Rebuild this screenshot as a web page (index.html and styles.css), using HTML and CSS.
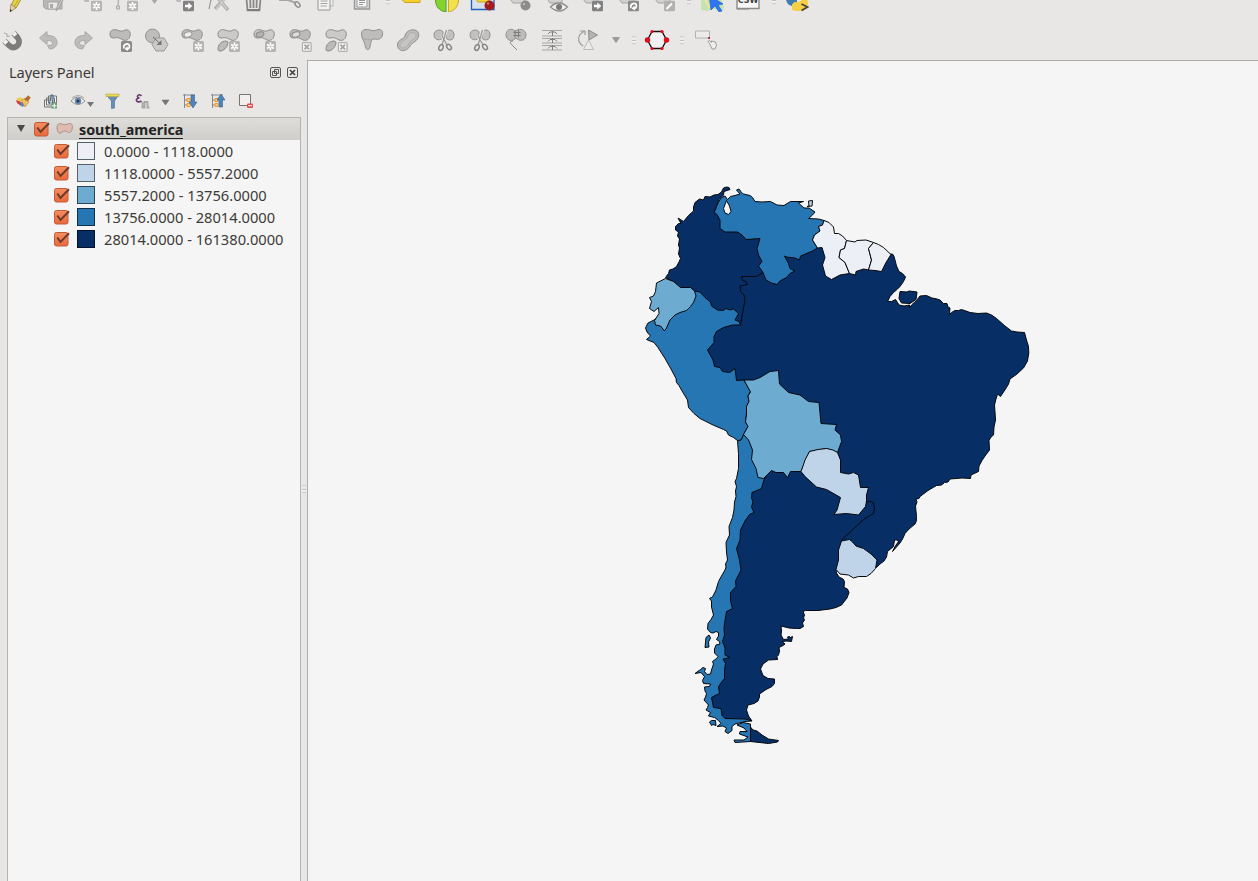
FILE: index.html
```html
<!DOCTYPE html>
<html lang="en">
<head>
<meta charset="utf-8">
<title>Layers</title>
<link rel="stylesheet" href="styles.css">
</head>
<body>
<svg class="defs" width="0" height="0">
  <defs>
    <symbol id="star" viewBox="0 0 11 11"><rect width="11" height="11" rx="1.5" fill="#b5b4b2"/><path d="M5.5 1.5v8M2 3.5l7 4M9 3.5l-7 4" stroke="#fff" stroke-width="1.7"/><circle cx="5.5" cy="5.5" r="1" fill="#b5b4b2"/></symbol>
    <symbol id="cross" viewBox="0 0 11 11"><rect x=".7" y=".7" width="9.6" height="9.6" rx="1" fill="#f4f4f4" stroke="#b0afad" stroke-width="1.4"/><path d="M3 3l5 5M8 3l-5 5" stroke="#a5a5a5" stroke-width="2"/></symbol>
    <symbol id="arrow" viewBox="0 0 11 11"><rect width="11" height="11" rx="1.5" fill="#828282"/><path d="M2 4.3h3.3V2L9.3 5.5 5.3 9V6.7H2z" fill="#fff"/></symbol>
    <symbol id="turn" viewBox="0 0 11 11"><rect width="11" height="11" rx="1.5" fill="#8a8a88"/><path d="M3 7.5C1.5 3 8.500 1 8.500 5.200Q8.500 8 5.500 8" fill="none" stroke="#fff" stroke-width="1.700"/><path d="M6.500 5L3.500 8l3.500 2z" fill="#fff"/></symbol>
    <symbol id="edit" viewBox="0 0 11 11"><rect width="11" height="11" rx="1.500" fill="#b3b2b0"/><path d="M2.500 8.500L8 3" stroke="#fff" stroke-width="2"/></symbol>
    <symbol id="blob" viewBox="0 0 24 14"><path d="M2 6C2 2 6 1 9 2c3 1 5 2 8 0 4-1 6 2 5 6-1 4-4 5-7 4-3-2-6-3-9-2C3 10 2 9 2 6Z" stroke="#8d8d8b" stroke-width="1"/></symbol>
    <symbol id="scissors" viewBox="0 0 24 24"><path d="M2 7c0-6 8-6 9-3v5c-1 4-9 4-9-2zM14 4c2-3 8-3 8 3s-6 6-8 3z" fill="#c2c1bf" stroke="#929290"/><path d="M15 1L9.500 17M10 8l5 9" stroke="#e9e7e5" stroke-width="3"/><path d="M14.500 2L10 17M10 8l5 9" stroke="#9a9a98" stroke-width="1.300"/><ellipse cx="9" cy="19.500" rx="2" ry="3" fill="none" stroke="#858583" stroke-width="1.500" transform="rotate(25 9 19.500)"/><ellipse cx="17" cy="19" rx="2" ry="3" fill="none" stroke="#858583" stroke-width="1.500" transform="rotate(-35 17 19)"/></symbol>
    <symbol id="label" viewBox="0 0 24 24"><path d="M1 8h17v7H6z" fill="#d2d1cf" stroke="#a5a4a2"/></symbol>
    <symbol id="undo" viewBox="0 0 24 24"><path d="M3.500 10L11 3.500V7.500C18 7.500 21 10 21 14.500S17 21 13.500 21l-2-3.500c4 0 5-1 5-2.500 0-1.800-2-2.500-5.500-2.500v4z" fill="#bdbcba" stroke="#a9a8a6"/></symbol>
    <symbol id="page" viewBox="0 0 24 24"><path d="M4 5h12v17H4z" fill="#f1f1f0" stroke="#979795"/><path d="M6.500 13h7M6.500 15.500h7M6.500 18h6" stroke="#a7a7a5"/></symbol>
    <symbol id="handle" viewBox="0 0 4 9"><path d="M0 1h4M0 4.500h4M0 8h4" stroke="#c1bfbd"/><path d="M0 2h4M0 5.500h4M0 9h4" stroke="#fff" stroke-width=".6"/></symbol>
    <symbol id="down" viewBox="0 0 8 6"><path d="M.5.5h7L4 5.500z" fill="#999" stroke="#8b8b89" stroke-width=".6"/></symbol>
    <linearGradient id="orange" x2="0" y2="1"><stop stop-color="#f58e62"/><stop offset="1" stop-color="#e8693c"/></linearGradient>
    <symbol id="check" viewBox="0 0 17 16"><rect x="1.500" y="1.500" width="13.500" height="13.500" rx="2" fill="url(#orange)" stroke="#c25a34"/><path d="M4.300 6.500L7.500 11 16 2.300" fill="none" stroke="#6c3b2a" stroke-width="2"/></symbol>
  </defs>
</svg>

<div class="toolbar toolbar-top">
  <span class="slot s39"><svg class="icon" viewBox="0 0 24 24"><path d="M6 17L14 3l5 3-8 14z" fill="#e6d44a" stroke="#a39632"/><path d="M9 19L17 5" stroke="#b5a436"/><path d="M6 16l5 4-6 4z" fill="#e7cf9e" stroke="#8b7a4c" stroke-width=".7"/><path d="M5 21l2 1.500L5 24z" fill="#333"/></svg></span>
  <span class="slot"><svg class="icon" viewBox="0 0 24 24"><path d="M1.500 4H20v17H4l-2.500-2z" fill="#b9b8b6" stroke="#a5a4a2"/><path d="M6 14h10v7H6z" fill="#e9e8e6" stroke="#a5a4a2"/><path d="M8 16h3v4H8z" fill="#aaa"/><path d="M23 8l-6 12-3 3 1-4 6-12z" fill="#c4c3c1" stroke="#a3a2a0"/></svg></span>
  <span class="slot"><svg class="icon" viewBox="0 0 24 24"><path d="M4 10h7v4H7z" fill="#bbb"/><use href="#star" x="13" y="12.500" width="11" height="11"/></svg></span>
  <span class="slot"><svg class="icon" viewBox="0 0 24 24"><path d="M5 2L4 20" stroke="#b6b5b3" stroke-width="1.500"/><path d="M2.500 18h3v3h-3z" fill="#ddd" stroke="#a9a8a6"/><use href="#star" x="13" y="12.500" width="11" height="11"/></svg></span>
  <span class="slot s20"><svg class="icon" viewBox="0 0 24 24"><path d="M9 11h7l-3.500 5z" fill="#aaa9a7"/></svg></span>
  <span class="slot"><svg class="icon" viewBox="0 0 24 24"><path d="M4 10h7v4H7z" fill="#bbb"/><use href="#arrow" x="13" y="12.500" width="11" height="11"/></svg></span>
  <span class="slot"><svg class="icon" viewBox="0 0 24 24"><path d="M6 7L3 21" stroke="#999" stroke-width="1.200"/><path d="M9 21L21 8M11 9l11 13" stroke="#b0afad" stroke-width="3.500"/><path d="M10 21l10-11M12 10l9 11" stroke="#cfcecc" stroke-width="1.500"/></svg></span>
  <span class="slot"><svg class="icon" viewBox="0 0 24 24"><path d="M4 5l1.500 17h12L19 5M8 5l.5 15M11.500 5v15M15 5l-.5 15" fill="none" stroke="#898987" stroke-width="1.800"/><path d="M5 22.200h13" stroke="#7b7b79" stroke-width="2"/></svg></span>
  <span class="slot"><svg class="icon" viewBox="0 0 24 24"><path d="M1 12h9l8 3" fill="none" stroke="#a7a7a5" stroke-width="2"/><ellipse cx="19.500" cy="16.500" rx="2" ry="3" transform="rotate(-40 19.500 16.500)" fill="none" stroke="#8e8e8c" stroke-width="1.500"/></svg></span>
  <span class="slot"><svg class="icon" viewBox="0 0 24 24"><path d="M10 2h9v16h-9z" fill="#eee" stroke="#b7b6b4"/><use href="#page" width="24" height="24"/></svg></span>
  <span class="slot"><svg class="icon" viewBox="0 0 24 24"><path d="M4.500 5h15v16h-15z" fill="#ddd" stroke="#979795" stroke-width="1.400"/><path d="M7 5h10v14H7z" fill="#f5f5f5" stroke="#999"/><path d="M9 12.500h6M9 14.500h6M9 16.500h4" stroke="#999"/></svg></span>
  <span class="slot s16"><svg class="grip grip-top" viewBox="0 0 4 9"><use href="#handle" width="4" height="9"/></svg></span>
  <span class="slot s33"><svg class="icon" viewBox="0 0 24 24"><path d="M-2 9h21v5.500H4z" fill="#f4d12d" stroke="#c9a51c"/></svg></span>
  <span class="slot"><svg class="icon" viewBox="0 0 24 24"><path d="M11 0v24C4 23 .5 18 .5 12z" fill="#84d32f" stroke="#5a9b22"/><path d="M13.500 0v24c6-1 10-6 10-12z" fill="#f2e04c" stroke="#c9a72b"/></svg></span>
  <span class="slot"><svg class="icon" viewBox="0 0 24 24"><path d="M.5 3h22.500v18.500H.5z" fill="#d5e2ed" stroke="#1d5fc1" stroke-width="1.300"/><path d="M3 8h15v6H7z" fill="#f4d83d" stroke="#c8a51a"/><circle cx="18.500" cy="17.500" r="5" fill="#a11d1d"/><circle cx="17" cy="15.500" r="1.200" fill="#d07070"/></svg></span>
  <span class="slot"><svg class="icon" viewBox="0 0 24 24"><use href="#label" width="24" height="24"/><circle cx="18.500" cy="17.500" r="5" fill="#8c8c8a"/><circle cx="17" cy="16" r="1" fill="#ccc"/></svg></span>
  <span class="slot s37"><svg class="icon" viewBox="0 0 24 24"><use href="#label" width="24" height="24"/><path d="M6.500 19q8-8 17 0-8 8-17 0z" fill="#eee" stroke="#8e8e8c" stroke-width="1.200"/><circle cx="15" cy="19" r="3" fill="#777"/></svg></span>
  <span class="slot"><svg class="icon" viewBox="0 0 24 24"><use href="#label" width="24" height="24"/><use href="#arrow" x="12" y="12.500" width="11" height="11"/></svg></span>
  <span class="slot"><svg class="icon" viewBox="0 0 24 24"><use href="#label" width="24" height="24"/><use href="#turn" x="12" y="12.500" width="11" height="11"/></svg></span>
  <span class="slot"><svg class="icon" viewBox="0 0 24 24"><use href="#label" width="24" height="24"/><use href="#edit" x="12" y="12.500" width="11" height="11"/></svg></span>
  <span class="slot s14"><svg class="grip grip-top" viewBox="0 0 4 9"><use href="#handle" width="4" height="9"/></svg></span>
  <span class="slot s33"><svg class="icon" viewBox="0 0 24 24"><path d="M0 6l19-1 4 15-2 3-8-2-6 2-7-1z" fill="#c5e3ae"/><path d="M3 10l6 10" stroke="#efe5a8" stroke-width="2"/><path d="M8 7l14 9-5 1 4 6-3 1-4-6-4 4z" fill="#2f76f2" stroke="#2464d8" stroke-width=".7"/></svg></span>
  <span class="slot s37"><svg class="icon" viewBox="0 0 24 24"><path d="M1 3h22v17.500H1z" fill="#f7f7f7" stroke="#8a8a88" stroke-width="1.400"/><text class="csw" x="12" y="14.500">CSW</text><path d="M1 21.500h12" stroke="#aaa"/></svg></span>
  <span class="slot s16"><svg class="grip grip-top" viewBox="0 0 4 9"><use href="#handle" width="4" height="9"/></svg></span>
  <span class="slot s32"><svg class="icon" viewBox="0 0 24 24"><path d="M0 10q0-5 7-5h4v9q-4 0-5 4-6-1-6-8z" fill="#3d7bb0"/><path d="M6 21v-3q0-4 5-4 6 0 6-6 5 1 5 8 0 7-9 7-7 0-7-2z" fill="#f7cf42"/><path d="M15.500 16l6 3-6 3.500" fill="none" stroke="#444" stroke-width="1.800"/></svg></span>
</div>

<div class="toolbar toolbar-main">
  <span class="slot"><svg class="icon" viewBox="0 0 24 24"><path d="M4.500 13l4 4c3 3 6 3 8.500 1s3-5.500.5-8.500L13.500 5" fill="none" stroke="#7c7c7a" stroke-width="5.800"/><path d="M4.500 13l2.300 2.300M13.500 5l2.200 2.400" stroke="#f4f4f3" stroke-width="4.200"/><path d="M4 5l3 1v2.500l3-.5" fill="none" stroke="#b4b3b1" stroke-width="1.200"/></svg></span>
  <span class="slot"><svg class="icon" viewBox="0 0 24 24"><use href="#undo" width="24" height="24"/></svg></span>
  <span class="slot"><svg class="icon flip" viewBox="0 0 24 24"><use href="#undo" width="24" height="24"/></svg></span>
  <span class="slot"><svg class="icon" viewBox="0 0 24 24"><use href="#blob" width="24" height="14" fill="#bcbbb9"/><use href="#turn" x="13" y="13" width="11" height="11"/></svg></span>
  <span class="slot"><svg class="icon" viewBox="0 0 24 24"><circle cx="8.500" cy="8" r="7" fill="#bebdbb" stroke="#949492"/><path d="M12 10h8l4 6.500-4 6.500h-8l-4-6.500z" fill="#cbcac8" stroke="#999997"/><path d="M9 9l7.500 7" stroke="#666"/><path d="M17.500 12v5h-5z" fill="#777"/></svg></span>
  <span class="slot"><svg class="icon" viewBox="0 0 24 24"><use href="#blob" width="24" height="14" fill="#bcbbb9"/><ellipse cx="8" cy="6.500" rx="4" ry="2.500" fill="#eee" stroke="#999" transform="rotate(-15 8 6.500)"/><use href="#star" x="13" y="13" width="11" height="11"/></svg></span>
  <span class="slot"><svg class="icon" viewBox="0 0 24 24"><use href="#blob" width="24" height="14" fill="#cbcac8"/><path d="M2 21c0-4 3-8 8-8l2 1c0 4-3 8-7 9-2 0-3 0-3-2z" fill="#bcbbb9" stroke="#888886"/><use href="#star" x="13" y="13" width="11" height="11"/></svg></span>
  <span class="slot"><svg class="icon" viewBox="0 0 24 24"><use href="#blob" width="24" height="14" fill="#cbcac8"/><ellipse cx="8" cy="6.500" rx="4" ry="2.500" fill="#b5b4b2" stroke="#888" transform="rotate(-15 8 6.500)"/><use href="#star" x="13" y="13" width="11" height="11"/></svg></span>
  <span class="slot"><svg class="icon" viewBox="0 0 24 24"><use href="#blob" width="24" height="14" fill="#bcbbb9"/><ellipse cx="8" cy="6.500" rx="4" ry="2.500" fill="#ddd" stroke="#888" transform="rotate(-15 8 6.500)"/><use href="#cross" x="13.500" y="14" width="10.500" height="10"/></svg></span>
  <span class="slot"><svg class="icon" viewBox="0 0 24 24"><use href="#blob" width="24" height="14" fill="#cbcac8"/><path d="M2 21c0-4 3-8 8-8l2 1c0 4-3 8-7 9-2 0-3 0-3-2z" fill="#bcbbb9" stroke="#888886"/><use href="#cross" x="13.500" y="14" width="10.500" height="10"/></svg></span>
  <span class="slot"><svg class="icon" viewBox="0 0 24 24"><path d="M1.500 5C2 1 7 1 10 2s5 1 8-.5c4-.5 5 2 4.500 5.500C22 11 18 12 15 11c-4-.5-4 3-5 8-1 4-4 3-4.500 0C5 13 1 11 1.500 5z" fill="#bebdbb" stroke="#91918f"/><path d="M2 10q6 3 12 1" fill="none" stroke="#9b9b99" stroke-dasharray="2 1"/></svg></span>
  <span class="slot"><svg class="icon" viewBox="0 0 24 24"><path d="M1.500 17c0-6 6-5 7.500-9C10 2 18 0 21.500 3.500c3 4 0 9-4 11-3 1-3 4-6 6.500-5 3.500-10 1-10-4z" fill="#bebdbb" stroke="#90908e"/><path d="M4 17c0-4 6-4 7.500-8C12.500 4.500 17 3.500 19.500 5.500c2 3-1 5.500-4 7-2.500 1.500-3 4.500-5.500 6.500-3 2-6 .5-6-2z" fill="#c6c5c3" stroke="#a5a5a3" stroke-width=".7"/></svg></span>
  <span class="slot"><svg class="icon" viewBox="0 0 24 24"><use href="#scissors" width="24" height="24"/></svg></span>
  <span class="slot"><svg class="icon" viewBox="0 0 24 24"><use href="#scissors" width="24" height="24"/></svg></span>
  <span class="slot"><svg class="icon" viewBox="0 0 24 24"><path d="M2 7c0-7 8-7 9-3 1-4 11-4 11 3 0 7-8 6-10 3C9 14 2 13 2 7z" fill="#bdbcba" stroke="#929290"/><path d="M9.500 4.500h7M9.500 7.500h7M11 2v7.500M14.500 2v7.500" stroke="#7d7d7b"/><path d="M9 13q-5 0-1 4l5 5" fill="none" stroke="#8b8b89"/></svg></span>
  <span class="slot"><svg class="icon" viewBox="0 0 24 24"><g fill="#f3f3f2" stroke="#a5a5a3"><path d="M2 2.500h20M2 8h20M2 10.500h20M2 15h20M2 17.500h20M2 22h20"/></g><path d="M8 6l2-2h5l2 2M8 13.500l2-2h5l2 2M8 20.500l2-2h5l2 2M12.500 3v5M12.500 10v5M12.500 17v5" fill="none" stroke="#7f7f7d"/></svg></span>
  <span class="slot"><svg class="icon" viewBox="0 0 24 24"><path d="M7 18C1 14 1 7 8 3.500M4 3h5v4" fill="none" stroke="#9b9b99" stroke-width="1.200"/><path d="M12.500 2l9 5-8.500 5z" fill="#b5b4b2" stroke="#8d8d8b"/><path d="M12.500 12l5 9.500h-10z" fill="#ecebea" stroke="#bbb"/></svg></span>
  <span class="slot s20"><svg class="tri" viewBox="0 0 8 6"><use href="#down" width="8" height="6"/></svg></span>
  <span class="slot s16"><svg class="grip" viewBox="0 0 4 9"><use href="#handle" width="4" height="9"/></svg></span>
  <span class="slot s30"><svg class="icon" viewBox="0 0 24 24"><path d="M2.500 12l4.500-8.500h10l4.500 8.500-4.500 8.500H7z" fill="#f3f2f2" stroke="#111" stroke-width="1.300"/><g fill="#e10917"><circle cx="2.500" cy="12" r="2.700"/><circle cx="21.500" cy="12" r="2.700"/><circle cx="7" cy="3.500" r="1.600"/><circle cx="17" cy="3.500" r="1.600"/><circle cx="7" cy="20.500" r="1.600"/><circle cx="17" cy="20.500" r="1.600"/></g></svg></span>
  <span class="slot s20"><svg class="grip" viewBox="0 0 4 9"><use href="#handle" width="4" height="9"/></svg></span>
  <span class="slot s28"><svg class="icon" viewBox="0 0 24 24"><path d="M1.500 3h14v7h-14z" fill="#ecebea" stroke="#b2b1af"/><path d="M15.500 15.500l-1.500-2 1.500-1 2 2v-1.500l4 1 1 3.500-1.500 3.500h-3z" fill="#efeeee" stroke="#888" stroke-width=".8"/><path d="M14 9h2v2h-2z" fill="#c33"/><path d="M15 9h1v1h-1z" fill="#33c"/></svg></span>
</div>

<main class="workspace">
  <aside class="panel">
    <header class="panel-head">
      <h1 class="panel-title">Layers Panel</h1>
      <svg class="winbtn" viewBox="0 0 12 12"><rect x=".5" y=".5" width="10" height="10" rx="1.500" fill="none" stroke="#555"/><path d="M4.500 2.500h4v4h-4zM2.500 4.500h4v4h-4z" fill="#e9e7e5" stroke="#555"/></svg>
      <svg class="winbtn" viewBox="0 0 12 12"><rect x=".5" y=".5" width="10" height="10" rx="1.500" fill="none" stroke="#555"/><path d="M3 3l5 5M8 3l-5 5" stroke="#444" stroke-width="1.700"/></svg>
    </header>
    <div class="panel-tools">
      <svg class="tool t28" viewBox="0 0 28 16"><path d="M1 6l4-2 4 3-4 2z" fill="#edce4b"/><path d="M1 7l5 2v4l-4-3z" fill="#d93838"/><path d="M5 10l4-2 2 4-4 2z" fill="#4c83cc"/><path d="M6 7l5-2 3 4-4 5z" fill="#ebc15d" stroke="#bb8640" stroke-width=".6"/><path d="M10 7l4-4M12 8l3-4" stroke="#b06c31" stroke-width="2"/></svg>
      <svg class="tool t27" viewBox="0 0 27 16"><path d="M1.500 7h8v7h-8zM3.500 5h8v7h-8zM5.500 3h8v7h-8z" fill="#eee" stroke="#737371"/><path d="M6 11c1-3 2-5 2-9h2v10" fill="none" stroke="#426990"/><path d="M8.500 10h5.500v5.500H8.500z" fill="#6aa172"/><path d="M11.300 10.500v4.500M9 12.800h4.500" stroke="#fff"/></svg>
      <svg class="tool t35" viewBox="0 0 35 16"><path d="M1 8q7-8 14 0-7 7-14 0z" fill="#f3f3f1" stroke="#8f8f8d"/><path d="M2 5q6-5 12 0" fill="none" stroke="#aaa"/><circle cx="8" cy="8" r="3.300" fill="#6589b0"/><circle cx="8" cy="8" r="1.500" fill="#263951"/><path d="M17 9h7L20.500 14z" fill="#777"/></svg>
      <svg class="tool t29" viewBox="0 0 29 16"><path d="M1 1.500h13L9.500 8v7l-3 .5V8z" fill="#678fb8" stroke="#527399" stroke-width=".7"/><path d="M1 1h13v2.500H1z" fill="#ecd858" stroke="#b8a743" stroke-width=".6"/></svg>
      <svg class="tool t27" viewBox="0 0 27 16"><path d="M7.500 3C5-.5 1 4.500 5.500 5 0 5.500 2.500 11 7.500 8" fill="none" stroke="#693b70" stroke-width="1.700"/><path d="M8.500 9v5.500h2V9h3v5.500h2" fill="none" stroke="#a6a6a4" stroke-width="1.800"/></svg>
      <svg class="tool t21" viewBox="0 0 21 16"><path d="M1 7h7l-3.500 5z" fill="#777" stroke="#666" stroke-width=".5"/></svg>
      <svg class="tool t28" viewBox="0 0 28 16"><path d="M2.500 1v14M1 2h12M3 7h3M3 12h3" stroke="#85898b" fill="none"/><path d="M5 5.500h3v3H5zM5 10.500h3v3H5z" fill="#fbd28d" stroke="#ed9728"/><path d="M9 2h3.500v7H15l-4 6-4-6h2z" fill="#4e83bd" stroke="#365f8f" stroke-width=".6"/></svg>
      <svg class="tool t28" viewBox="0 0 28 16"><path d="M2.500 1v14M1 2h12M3 7h3M3 12h3" stroke="#85898b" fill="none"/><path d="M5 5.500h3v3H5zM5 10.500h3v3H5z" fill="#fbd28d" stroke="#ed9728"/><path d="M9 14h3.500V7H15l-4-6-4 6h2z" fill="#4e83bd" stroke="#365f8f" stroke-width=".6"/></svg>
      <svg class="tool t27" viewBox="0 0 27 16"><path d="M1.500 1.500h11v11h-11z" fill="#f1f0ef" stroke="#757573"/><rect x="9" y="10.500" width="6" height="4.500" rx="1" fill="#e64c4c"/><path d="M10 12.700h4" stroke="#fff"/></svg>
    </div>
    <div class="tree">
      <div class="row row-layer">
        <svg class="twisty" viewBox="0 0 8 8"><path d="M0 0h8L4 7z" fill="#4a4a48"/></svg>
        <svg class="check" viewBox="0 0 17 16"><use href="#check" width="17" height="16"/></svg>
        <svg class="poly" viewBox="0 0 17 14"><path d="M1 6C1 1 4 1 7 2.500c2 .5 4 0 6-1 3-.5 4 2 3 6-.5 3-3 4-5 2-2-1-4-.5-6 1.500C2 12 1.500 9 1 6z" fill="#e0bcb0" stroke="#a48c85" stroke-width=".9"/></svg>
        <span class="layer-name">south_america</span>
      </div>
      <div class="row"><svg class="check" viewBox="0 0 17 16"><use href="#check" width="17" height="16"/></svg><i class="swatch c1"></i><span>0.0000 - 1118.0000</span></div>
      <div class="row"><svg class="check" viewBox="0 0 17 16"><use href="#check" width="17" height="16"/></svg><i class="swatch c2"></i><span>1118.0000 - 5557.2000</span></div>
      <div class="row"><svg class="check" viewBox="0 0 17 16"><use href="#check" width="17" height="16"/></svg><i class="swatch c3"></i><span>5557.2000 - 13756.0000</span></div>
      <div class="row"><svg class="check" viewBox="0 0 17 16"><use href="#check" width="17" height="16"/></svg><i class="swatch c4"></i><span>13756.0000 - 28014.0000</span></div>
      <div class="row"><svg class="check" viewBox="0 0 17 16"><use href="#check" width="17" height="16"/></svg><i class="swatch c5"></i><span>28014.0000 - 161380.0000</span></div>
    </div>
  </aside>
  <div class="splitter"><svg class="grip" viewBox="0 0 4 9"><use href="#handle" width="4" height="9"/></svg></div>
  <section class="canvas">
    <svg class="map" viewBox="308 61 950 820">
      <!-- Chile -->
      <path class="m4" d="M743.5 434.500L741 440 737.500 440.500 738.500 453.500V468.500L736.500 478.500 735 481.500 736.500 486.500 735.500 491 736 496.500 734.500 502 734 510 732.500 517.500 729 526.500 729.500 535 726 542.500 726.500 552 727.500 560 725.500 564 726 567 725 570 721.500 576 718.500 581.500 716 590 712.500 597 709.500 598.500 711.500 601 711.500 607 713.500 615 711 619.500 708 623.500 707.500 629 710.500 632.500 713 633 716 631.500 718.500 632.500 718.500 636 716.500 639.500 719.500 641.500 720 644 716 645 714.500 649 714.500 653 718 656.500 716.500 658.500 712.500 661.500 713.500 664 711.500 670 710.500 674 707 674.500 704.500 671.500 705.500 668.500 703 667.500 700.500 669.500 695 673.500 701 672.500 704.500 676.500 702.500 680.500 703.500 683.500 710.500 684 709.500 686.500 704.500 687 705 691 706.500 693.500 705.500 697 704 700 708.500 705 707.500 707.500 706 710 710.500 712.500 708.500 716 714.500 717.500 718.500 720.500 721 723.500 717 726.500 723 726 726.500 728 725 731.500 728 733.500 732 730.500 732 726.500 735 724 741 722.500 745 721.500 751.500 721 742 708 740 700 742 620 755 550 762 515 775 490 766 475 758 455 754 438z"/>
      <path class="m4" d="M706 637.500L709 635 710.500 638 708.500 642 709 647 705 647.500z"/>
      <path class="m4" d="M709.5 722L711.500 720.500 715.500 720.500 716 725.500 713 724.500 711.500 725.500z"/>
      <path class="m4" d="M737 725L743 722.500 750.500 724V741.500L735 742.500 734 740 744 740 748 737 739.500 734 740 731.500 747 731.500 744 728z"/>
      <path class="m5" d="M750.500 727L753 730 757 731 762 735 768.500 739 778.500 740.500 777.500 742 768.500 743.500 750.500 741.500z"/>
      <!-- Brazil -->
      <path class="m5" d="M892.5 254L893.800 256 895 260 896.500 266 899 271.500 902.500 273.500 905.500 277 903.500 281.500 900 286.500 897 289.500 893.500 292.500 890 296.500 887.500 301.500 891.500 301.500 895.500 299.500 897.500 302.500 899 305 904 306 909.500 305 909.500 308 911.500 305 916.500 300.500 920 296 926.500 295.500 932 298 937 299 940 300 943.500 303.500 947 303.500 948 307 950 308 949.500 314.500 951.500 312.500 955 310.500 958.500 310.500 961.500 309.500 966 311 970 312.500 978 313.500 986.500 313 991.500 315 996.500 318.500 1005 326 1011.500 331 1017 332 1024.500 332.500 1026.500 340 1028.500 346.500 1028.800 353 1027.500 361 1023.500 368 1017 374 1010 379 1008.500 384 1006.500 387.500 1003.500 392 1000.500 396.500 997.500 394 996 399 994.500 405 995 412 995.500 420 994 427 993.500 435 991 437 989 440.500 989.500 450 985 456 982 460.500 979 466 978.500 471.500 971 475 970.500 478.500 962 478 950 479 948 482 944.500 482.500 941.500 485 936.500 485.500 928 490.500 920 496.500 919 498.500 916 499 917 502 915.500 506 916.500 516.500 916.300 521 915 524 909 529 905 533.500 902.500 539 900 543 892.500 551.500 895 546.500 898.500 541.500 896.500 540 894.500 540 893.500 546.500 887.500 551.500 886.500 557 884 561 880 564 876.500 567.500 850 560 838 545 835 500 790 440 740 390 705 370 700 340 715 318 735 310 737 272 775 255 800 240 830 240 880 255z"/>
      <path class="m5" d="M900 291.500L907 292 909 291 917 292 916 299.500 910 303.500 901.500 303 899 298.500z"/>
      <!-- Argentina -->
      <path class="m5" d="M836 569.500L836.500 573 839 577 843 579 844.500 581.500 844 587.500 847.500 589 849 592.500 847 598 841.500 605 836 607.500 830 609 818 610.500 805.500 610.500 803 611.500 804.500 615 803.500 618 804.500 620 802.500 623 803.500 626.500 800 628.500 796.500 628.500 789 628 781 626 781.500 631 781 635 783.500 639.500 788.500 639 787.500 637 789.500 636.500 790.500 637.500 792.500 636.500 791.500 641.500 787 641 782 641.500 785 644 783 645.500 779 647.500 779.500 651 778.500 655 777 656.500 777.500 659.500 768.500 660 763 664 760.500 669 763 675.500 768 678.500 774.500 679 774.500 683.500 772 686.500 766 689.500 759.500 694 759.500 697 758 701 754 703.500 748 705 746.500 710 748.500 716 752 721 745 719 725 718.500 722 715.500 721 708.500 717 708 713.500 707.500 711.500 697.500 715 695.500 719.500 693.500 718.500 687 720.500 683.500 724.500 678.500 724.500 670 725.500 663.500 723 659 730 657.500 725 655 725 648 722.500 641.500 724.500 635 724 629 724.500 623.500 726.500 611.500 732.500 608.500 730.500 601 730.500 592.500 736 586.500 735.500 581 741 570 739.500 560 736.500 548.500 740 540 740.500 530 745 521 749.500 514.500 754 512.500 751.500 507 753 502 751.500 498 752 492.500 761.500 488.500 764 479.500 775 460 805 465 845 490 860 505 866 502.500 870 501 873.500 503 874.500 509 873.500 513.500 863.500 519.500 841.500 540 842 555z"/>
      <!-- Peru -->
      <path class="m4" d="M654 320L648 323 645.500 328 647 332 650.500 336 646.500 339.500 654 342.500 658 347.500 665 358.500 671 369 676 378.500 676.500 382.500 679 385.500 681.500 390 687.500 400 688.500 407.500 694 413.500 700 418.500 712 424.500 723.500 429.500 726.500 431 728.500 435 733.500 437.500 737.500 440.500 741 440 743.500 434.500 748 426.500 745.500 422 746.500 414 746.500 406.500 749 401.500 748 396 750.500 391.500 744 380 736.500 380.500 735 368.500 729.500 372.500 722.500 371.500 720 367.500 714.500 366.500 713 360 707.500 350 714 342.500 714 336.500 716.500 331.500 723.500 327.500 732.500 325 740.500 325 742 312 725 295 705 285 690 290z"/>
      <!-- Venezuela -->
      <path class="m4" d="M714 213L716.500 206.500 718.500 202 721.500 197.500 725 196 727.500 199.500 730.500 196.500 735 195.500 740 194 736.500 190 739 189 741.500 192.500 743.500 194 750 195.500 752.500 197.500 755 201.500 762 202 770.500 201.500 777 205 784 205.500 790.500 201.500 803.500 201.500 798.500 203 804 208 809 208 815 212 812.500 215 808.500 218.500 818.500 219 824 220.500 822.500 225 818.500 226.500 820 231 814.500 235 812.500 240 817.500 248 811.500 251.500 800.500 256 799.500 260 795 258 786.500 257 784.500 256 788.500 263.500 790 268.500 795 271 790 273.500 786.500 277.500 780 281 777 284.500 771.500 283 766 280 763 272.500 745 255 735 242 710 228z"/>
      <path class="lake" d="M726.500 200.500L723.500 208.500 725 213 728.500 214.500 731 211.500 729.500 206z"/>
      <path class="m2" d="M807 206.500L809 206 808.500 201 812.500 200.500 812 206z"/>
      <!-- Colombia -->
      <path class="m5" d="M730 189.500L729 187.500 726.500 187 723.500 188 721.500 192 718 194.500 714 195 710 197 705 196.500 703.500 200 699.500 199 695 202.500 693.500 207 693.500 211 688.500 215.500 683.500 221.500 678 218 681 223.500 678.500 223.500 675.500 226.500 675.500 230 678.500 232 677.500 236 679.500 239 678.500 245 679.500 248 678.500 254 680.500 258.500 679 262 676.500 266.500 673 269 669.500 270 668.500 273.500 665.500 277.500 673.500 281.500 680.500 287.500 690.500 287.500 694.500 291 700 292 705 297.500 710.500 302 711.500 306 717.500 310 723.500 310.500 726 308.500 730 310 733.500 309 738.500 313.500 735 320 739 321.500 740.500 325 742.500 313.500 745 300 744 295 740.500 291.500 740 286 747.500 284.500 746 281.500 742.500 280.500 741.500 276.500 756.500 276.500 763 272.500 758.500 266 762 261.500 758.500 255 757 248.500 760 238.500 746 239.500 742 235 737.500 232 725 232 720 228.500 720 220 717 214.500 714 212.500 716.500 206.500 718.500 200 723.500 195 724 191.500z"/>
      <!-- Ecuador -->
      <path class="m3" d="M665.5 278.500L656.500 283 655.500 291.500 653.500 296 649.500 297.500 651.500 301.500 649.500 308.500 654 311.500 658.500 307.500 659 313.500 654.500 320.500 655.500 325 660.500 326 664.500 331 666.500 328 670 320 675 315 680 312.500 686.500 310.500 690.500 306.500 693.500 302.500 696 296 694.500 291 690.500 287.500 680.500 287.500 673.500 281.500z"/>
      <!-- Bolivia -->
      <path class="m3" d="M744 380L750.500 392 748 396 749 401.500 746.500 406.500 746.500 414 745.500 422 748 426.500 743.500 434.500 748.500 440 752.500 450 751.500 459.500 756 468.500 758 477.500 763.500 478.500 771.500 470.500 776 472.500 783.500 472.500 787.500 477.500 790.500 471.500 801 471.500 809.500 451.500 826.500 448.500 837.500 452.500 841.500 441.500 840.500 435 835 430 836.500 424.500 821 423.500 819 402.500 808.500 401.500 800 395 788.500 392.500 779.500 384 778.500 370.500 770 371.500 760 377.500 753.500 380z"/>
      <!-- Paraguay -->
      <path class="m2" d="M801 471.500L803 466 805 460 809.500 451.500 818 449.500 826.500 448.500 833 450 837.500 452.500 840.500 460V472.500L848.500 474 853.500 472.500 858.500 475 860.500 487.500 868.500 487.500 866.500 495 866.500 501 865.500 506.500 858.500 515 846.500 513.500 834 514.500 837 510 840.500 497.500 826.500 489.500 816.500 487 805 476.500z"/>
      <!-- Uruguay -->
      <path class="m2" d="M841.5 541L849.500 539.500 852.500 542 856 546 863.500 548.500 871 554 877 560 875.500 568.500 871 573.500 866.500 576.500 858.500 576.500 853.500 578 848.500 575 840 574 836 569.500 838.500 560 838.500 550z"/>
      <!-- Guyana, Suriname, French Guiana -->
      <path class="m1" d="M824 220.500L829 222.500 833.500 227 834.500 233.500 838.500 233.500 842.500 236 846.500 240.500 844.500 248.500 840.500 250 839 257.500 845 262.500 849.500 273.500 840 275 831.500 279.500 825.500 276 822.500 265 825 257.500 822 247.500 817.500 248 812.500 240 814.500 235 820 231 818.500 226.500 822.500 225z"/>
      <path class="m1" d="M846.5 240.500L855 242 857 240.500 866 240 873.500 242.500 868.500 248.500 871.500 260 868.500 270 863.500 269 856 271.500 855.500 275 849.500 273.500 845 262.500 839 257.500 840.500 250 844.500 248.500z"/>
      <path class="m1" d="M873.5 242.500L878.500 244.500 883.500 247.500 891 254.500 886 262.500 881.500 271.500 875 270.500 868.500 270 871.500 260 868.500 248.500z"/>
    </svg>
  </section>
</main>
</body>
</html>
```
FILE: styles.css
```css
* { box-sizing: border-box; }
body {
  margin: 0;
  width: 1258px;
  height: 881px;
  overflow: hidden;
  display: flex;
  flex-direction: column;
  background: #e9e7e5;
  color: #3c3b37;
  font: 14.67px "Noto Sans", "Open Sans", sans-serif;
}
svg { display: block; flex: none; }
.defs { position: absolute; }

.toolbar { display: flex; flex: none; }
.toolbar-top { height: 12px; align-items: flex-end; overflow: hidden; }
.toolbar-top .slot:first-child { margin-left: -3px; }
.toolbar-main { height: 48px; align-items: center; padding-top: 8px; }
.toolbar-main .slot:first-child { margin-left: -6px; }
.slot { width: 36px; flex: none; display: flex; justify-content: center; }
.s14 { width: 14px; }
.s16 { width: 16px; }
.s20 { width: 20px; }
.s28 { width: 28px; }
.s30 { width: 30px; }
.s32 { width: 32px; }
.s33 { width: 33px; }
.s37 { width: 37px; }
.s39 { width: 39px; }
.icon { width: 24px; height: 24px; overflow: visible; }
.flip { transform: scaleX(-1); }
.grip { width: 4px; height: 9px; }
.grip-top { margin-bottom: 7px; }
.tri { width: 8px; height: 6px; }
.csw { font: bold 8px "DejaVu Sans", sans-serif; text-anchor: middle; fill: #444; }

.workspace { flex: 1; display: flex; min-height: 0; }
.panel { width: 301px; padding-left: 7px; display: flex; flex-direction: column; }
.panel-head { height: 25px; display: flex; align-items: center; gap: 5px; padding: 0 2px; }
.panel-title { margin: 0; flex: 1; font-size: 14.67px; font-weight: 400; line-height: 25px; letter-spacing: -.1px; }
.winbtn { width: 12px; height: 12px; }
.panel-tools { height: 32px; display: flex; align-items: center; padding-left: 8px; }
.tool { height: 16px; }
.t21 { width: 21px; }
.t27 { width: 27px; }
.t28 { width: 28px; }
.t29 { width: 29px; }
.t35 { width: 35px; }

.tree { flex: 1; border: 1px solid #b6b4b1; border-bottom: 0; background: #f5f5f5; }
.row { height: 22px; display: flex; align-items: center; padding-left: 45px; white-space: nowrap; line-height: 22px; }
.row .check { width: 17px; height: 16px; }
.row-layer { padding-left: 8px; background: linear-gradient(#dfddda, #d0cecb); }
.twisty { width: 8px; height: 8px; margin: 0 9px 0 1px; }
.row-layer .check { margin-left: -1px; }
.poly { width: 17px; height: 14px; margin: 0 6px; }
.layer-name { color: #222; font-weight: 700; font-size: 14.3px; line-height: 16px; border-bottom: 1px solid #222; margin-top: 2px; }
.swatch { width: 18px; height: 18px; border: 1px solid #556068; margin: 0 9px 0 7px; }
.c1 { background: #ecf0f6; }
.c2 { background: #bfd4e8; }
.c3 { background: #6eabd0; border-color: #2c4454; }
.c4 { background: #2676b4; border-color: #102f48; }
.c5 { background: #082e66; border-color: #03122a; }

.splitter { width: 6px; display: flex; align-items: center; justify-content: center; padding-top: 37px; }
.canvas { flex: 1; background: #f5f5f5; border-top: 1px solid #aeaba8; border-left: 1px solid #aeaba8; }
.map { width: 950px; height: 820px; }
.map path { stroke: #05080c; stroke-width: 1; stroke-linejoin: round; }
.m1 { fill: #ecf0f6; }
.m2 { fill: #bfd4e8; }
.m3 { fill: #6eabd0; }
.m4 { fill: #2676b4; }
.m5 { fill: #082e66; }
.map .lake { fill: #f5f5f5; }
```
